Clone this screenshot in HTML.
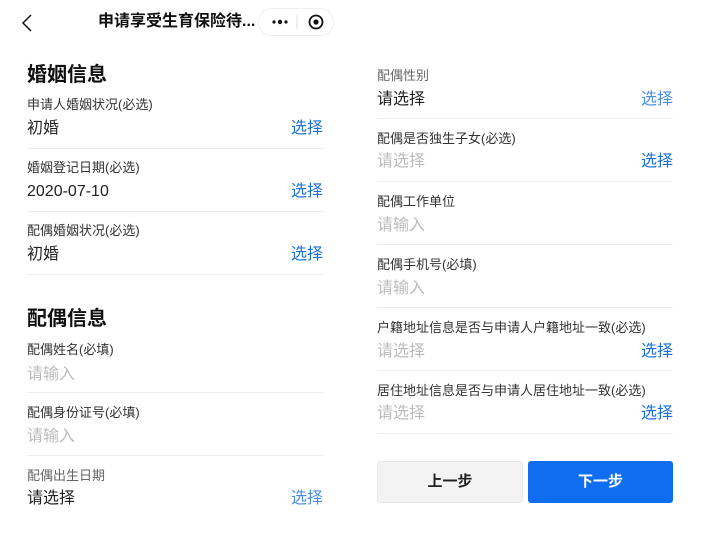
<!DOCTYPE html>
<html><head><meta charset="utf-8"><style>
*{margin:0;padding:0;box-sizing:border-box}
body{width:714px;height:535px;background:#fff;position:relative;overflow:hidden;font-family:"Liberation Sans","Noto Sans CJK SC",sans-serif;color:#222}
.a{position:absolute;white-space:nowrap}
.h,.l,.lg,.v,.p,.s{margin-top:2px}
.h{font-size:20px;font-weight:bold;color:#111;line-height:20px}
.l{font-size:13px;color:#333;line-height:13px}
.lg{font-size:13px;color:#666;line-height:13px}
.v{font-size:16px;color:#222;line-height:16px}
.p{font-size:16px;color:#bbb;line-height:16px}
.s{font-size:16px;color:#1a6fd8;line-height:16px}
.d{position:absolute;height:1px;background:#eee;width:296px}
</style></head><body>
<svg class="a" style="left:20px;top:13px" width="14" height="20" viewBox="0 0 14 20"><path d="M11 2 L3 10 L11 18" fill="none" stroke="#111" stroke-width="1.5"/></svg>
<div class="a" style="left:98px;top:13px;font-size:16px;font-weight:bold;color:#111;line-height:18px">申请享受生育保险待...</div>
<div class="a" style="left:258px;top:8px;width:76px;height:28px;border:1px solid #eee;border-radius:14px"></div>
<svg class="a" style="left:258px;top:8px" width="76" height="28" viewBox="0 0 76 28">
<circle cx="16" cy="14" r="1.6" fill="#111"/><circle cx="22" cy="14" r="2.2" fill="#111"/><circle cx="28" cy="14" r="1.6" fill="#111"/>
<line x1="39" y1="7" x2="39" y2="21" stroke="#ddd"/>
<circle cx="58" cy="14" r="6.5" fill="none" stroke="#111" stroke-width="1.8"/><circle cx="58" cy="14" r="2.6" fill="#111"/></svg>

<div class="a h" style="left:27px;top:63px">婚姻信息</div>
<div class="a l" style="left:27px;top:96px">申请人婚姻状况(必选)</div>
<div class="a v" style="left:27px;top:119px">初婚</div><div class="a s" style="left:291px;top:119px">选择</div>
<div class="d" style="left:27px;top:148px"></div>
<div class="a l" style="left:27px;top:159px">婚姻登记日期(必选)</div>
<div class="a v" style="left:27px;top:182px">2020-07-10</div><div class="a s" style="left:291px;top:182px">选择</div>
<div class="d" style="left:27px;top:211px"></div>
<div class="a l" style="left:27px;top:222px">配偶婚姻状况(必选)</div>
<div class="a v" style="left:27px;top:245px">初婚</div><div class="a s" style="left:291px;top:245px">选择</div>
<div class="d" style="left:27px;top:274px"></div>

<div class="a h" style="left:27px;top:307px">配偶信息</div>
<div class="a l" style="left:27px;top:341px">配偶姓名(必填)</div>
<div class="a p" style="left:27px;top:365px">请输入</div>
<div class="d" style="left:27px;top:392px"></div>
<div class="a l" style="left:27px;top:404px">配偶身份证号(必填)</div>
<div class="a p" style="left:27px;top:427px">请输入</div>
<div class="d" style="left:27px;top:455px"></div>
<div class="a lg" style="left:27px;top:467px">配偶出生日期</div>
<div class="a v" style="left:27px;top:489px">请选择</div><div class="a s" style="left:291px;top:489px;color:#4a8ee0">选择</div>

<div class="a lg" style="left:377px;top:67px">配偶性别</div>
<div class="a v" style="left:377px;top:90px">请选择</div><div class="a s" style="left:641px;top:90px;color:#4a8ee0">选择</div>
<div class="d" style="left:377px;top:118px"></div>
<div class="a l" style="left:377px;top:130px">配偶是否独生子女(必选)</div>
<div class="a p" style="left:377px;top:152px">请选择</div><div class="a s" style="left:641px;top:152px">选择</div>
<div class="d" style="left:377px;top:181px"></div>
<div class="a l" style="left:377px;top:193px">配偶工作单位</div>
<div class="a p" style="left:377px;top:216px">请输入</div>
<div class="d" style="left:377px;top:244px"></div>
<div class="a l" style="left:377px;top:256px">配偶手机号(必填)</div>
<div class="a p" style="left:377px;top:279px">请输入</div>
<div class="d" style="left:377px;top:307px"></div>
<div class="a l" style="left:377px;top:319px">户籍地址信息是否与申请人户籍地址一致(必选)</div>
<div class="a p" style="left:377px;top:342px">请选择</div><div class="a s" style="left:641px;top:342px">选择</div>
<div class="d" style="left:377px;top:370px"></div>
<div class="a l" style="left:377px;top:382px">居住地址信息是否与申请人居住地址一致(必选)</div>
<div class="a p" style="left:377px;top:404px">请选择</div><div class="a s" style="left:641px;top:404px">选择</div>
<div class="d" style="left:377px;top:433px"></div>

<div class="a" style="left:377px;top:461px;width:146px;height:42px;background:#f3f3f3;border:1px solid #e8e8e8;border-radius:3px;font-size:15px;font-weight:bold;color:#222;text-align:center;line-height:40px">上一步</div>
<div class="a" style="left:528px;top:461px;width:145px;height:42px;background:#0f6ef0;border-radius:3px;font-size:15px;font-weight:bold;color:#fff;text-align:center;line-height:42px">下一步</div>
</body></html>
